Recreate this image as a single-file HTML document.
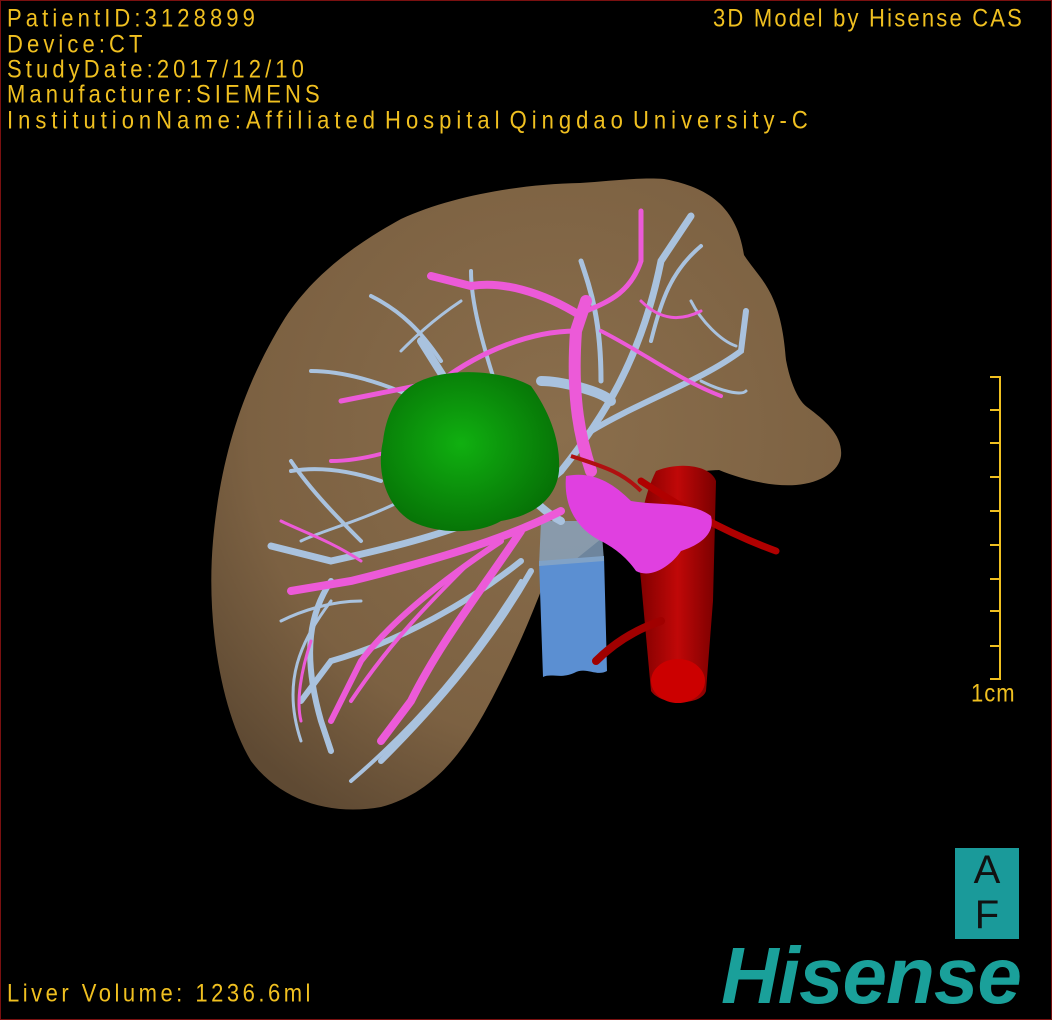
<!DOCTYPE html>
<html><head><meta charset="utf-8"><style>
html,body{margin:0;padding:0;background:#000;}
#w{position:relative;width:1052px;height:1020px;overflow:hidden;background:#000;box-sizing:border-box;border:1px solid #7a1010;}
.t{position:absolute;font-family:"Liberation Sans","Noto Sans CJK SC",sans-serif;color:#f0c020;font-size:22px;line-height:25px;white-space:nowrap;letter-spacing:4.1px;transform:scaleY(1.12);transform-origin:0 0;}
svg{position:absolute;left:0;top:0;}
</style></head><body><div id="w">
<svg width="1052" height="1020" viewBox="0 0 1052 1020">
<defs>
<radialGradient id="lv" cx="0.55" cy="0.4" r="0.7"><stop offset="0" stop-color="#8a6e4c"/><stop offset="0.7" stop-color="#7c6142"/><stop offset="1" stop-color="#5f4a33"/></radialGradient>
<radialGradient id="gr" cx="0.45" cy="0.45" r="0.6"><stop offset="0" stop-color="#10b010"/><stop offset="1" stop-color="#067006"/></radialGradient>
<linearGradient id="ao" x1="0" x2="1"><stop offset="0" stop-color="#800000"/><stop offset="0.5" stop-color="#c00808"/><stop offset="1" stop-color="#7a0000"/></linearGradient>
</defs>
<path d="M663,178 C700,185 735,200 743,254 C760,280 780,290 785,359 C790,385 798,400 806,406 C825,420 842,435 840,455 C838,470 820,482 795,484 C770,486 740,478 718,469 C700,470 680,470 650,500 C610,530 570,560 540,590 C528,620 520,640 500,680 C470,740 440,790 380,806 C330,815 280,800 250,760 C220,710 205,620 212,540 C220,450 245,380 284,317 C315,270 360,240 400,218 C450,195 520,183 579,182 C610,180 640,176 663,178 Z" fill="url(#lv)"/>
<path d="M538,560 L603,555 L606,670 C595,676 585,665 573,672 C560,678 550,672 542,676 Z" fill="#5b8fd2"/>
<path d="M540,520 L600,520 L603,560 L538,565 Z" fill="#8aa6c4" opacity="0.8"/>
<g stroke="#a9c2de" stroke-linecap="round" fill="none">
<path d="M560,520 C520,500 470,420 420,340" stroke-width="8"/>
<path d="M560,470 C600,420 640,360 660,260 L690,215" stroke-width="7"/>
<path d="M590,430 C640,400 700,380 740,350 L745,310" stroke-width="6"/>
<path d="M560,470 C500,520 420,540 330,560 L270,545" stroke-width="7"/>
<path d="M520,560 C470,600 400,640 330,660 L300,700" stroke-width="6"/>
<path d="M530,570 C490,640 440,700 380,760" stroke-width="6"/>
<path d="M520,580 C470,660 420,720 350,780" stroke-width="4"/>
<path d="M420,400 C380,380 340,370 310,370" stroke-width="4"/>
<path d="M440,360 C420,330 400,310 370,295" stroke-width="4"/>
<path d="M500,400 C480,340 470,300 470,270" stroke-width="4"/>
<path d="M600,380 C600,320 590,290 580,260" stroke-width="5"/>
<path d="M650,340 C660,300 670,270 700,245" stroke-width="4"/>
<path d="M330,580 C310,610 300,650 320,720 L330,750" stroke-width="6"/>
<path d="M360,540 C340,520 310,490 290,460" stroke-width="4"/>
<path d="M360,600 C330,600 300,610 280,620" stroke-width="3"/>
<path d="M700,380 C720,390 740,395 745,390" stroke-width="3"/>
<path d="M540,380 C560,380 600,390 610,400" stroke-width="10"/>
<path d="M380,480 C350,470 320,465 290,470" stroke-width="4"/>
<path d="M400,500 C360,520 320,530 300,540" stroke-width="3"/>
<path d="M330,600 C300,640 280,680 300,740" stroke-width="3"/>
<path d="M460,300 C430,320 410,340 400,350" stroke-width="3"/>
<path d="M690,300 C700,320 720,340 735,345" stroke-width="3"/>
</g>
<g stroke="#ec5ad8" stroke-linecap="round" fill="none">
<path d="M590,470 C580,440 570,400 575,330 L585,300" stroke-width="12"/>
<path d="M580,315 C540,290 500,280 470,285 L430,275" stroke-width="8"/>
<path d="M585,310 C610,300 630,290 640,260 L640,210" stroke-width="5"/>
<path d="M600,330 C640,350 680,380 720,395" stroke-width="4"/>
<path d="M575,330 C530,330 480,350 440,380 L340,400" stroke-width="5"/>
<path d="M560,510 C500,540 430,560 350,580 L290,590" stroke-width="8"/>
<path d="M520,530 C480,590 440,640 410,700 L380,740" stroke-width="8"/>
<path d="M500,540 C440,580 390,620 360,660 L330,720" stroke-width="6"/>
<path d="M470,560 C430,600 390,640 350,700" stroke-width="4"/>
<path d="M440,430 C400,450 360,460 330,460" stroke-width="4"/>
<path d="M640,300 C660,320 680,320 700,310" stroke-width="3"/>
<path d="M310,640 C300,670 295,700 300,720" stroke-width="3"/>
<path d="M360,560 C330,540 300,530 280,520" stroke-width="3"/>
</g>
<path d="M410,385 C440,365 500,368 530,385 C548,410 560,440 558,470 C555,500 530,515 500,520 C480,532 440,535 410,520 C385,505 375,470 382,440 C385,415 395,395 410,385 Z" fill="url(#gr)"/>
<path d="M655,470 C680,460 710,465 715,480 L712,600 L705,690 C700,705 660,705 650,690 L640,580 C635,540 640,500 655,470 Z" fill="url(#ao)"/>
<ellipse cx="677" cy="680" rx="27" ry="22" fill="#c00"/>
<path d="M640,480 C670,500 720,530 775,550" stroke="#b00000" stroke-width="7" fill="none" stroke-linecap="round"/>
<path d="M660,620 C630,630 610,645 595,660" stroke="#a00000" stroke-width="8" fill="none" stroke-linecap="round"/>
<path d="M570,455 C600,465 620,470 640,490" stroke="#b01010" stroke-width="4" fill="none"/>
<path d="M565,475 C590,470 610,480 630,500 C660,505 690,500 710,515 C715,535 695,545 680,550 C670,565 650,578 635,570 C625,555 610,545 600,540 C580,530 562,510 565,475 Z" fill="#e040e0"/>
<g stroke="#f0c020" stroke-width="2">
<line x1="999" y1="375" x2="999" y2="679"/>
<line x1="989" y1="376" x2="999" y2="376"/><line x1="989" y1="409" x2="999" y2="409"/><line x1="989" y1="442" x2="999" y2="442"/><line x1="989" y1="476" x2="999" y2="476"/><line x1="989" y1="510" x2="999" y2="510"/><line x1="989" y1="544" x2="999" y2="544"/><line x1="989" y1="578" x2="999" y2="578"/><line x1="989" y1="610" x2="999" y2="610"/><line x1="989" y1="645" x2="999" y2="645"/><line x1="989" y1="678" x2="999" y2="678"/>
</g>
<rect x="954" y="847" width="64" height="91" fill="#1a9a9a"/>
</svg>
<div class="t" style="left:6px;top:3px">PatientID:3128899</div>
<div class="t" style="left:6px;top:29px">Device:CT</div>
<div class="t" style="left:6px;top:54px">StudyDate:2017/12/10</div>
<div class="t" style="left:6px;top:79px">Manufacturer:SIEMENS</div>
<div class="t" style="left:6px;top:105px;letter-spacing:5px;word-spacing:-6px">InstitutionName:Affiliated Hospital Qingdao University-C</div>
<div class="t" style="left:712px;top:3px;letter-spacing:2.2px">3D Model by Hisense CAS</div>
<div class="t" style="left:970px;top:678px;letter-spacing:1px">1cm</div>
<div class="t" style="left:6px;top:978px;letter-spacing:3.5px">Liver Volume: 1236.6ml</div>
<div style="position:absolute;left:954px;top:847px;width:64px;text-align:center;font-family:'Liberation Sans',sans-serif;font-size:40px;line-height:45px;color:#111;">A<br>F</div>
<div style="position:absolute;left:720px;top:932px;font-family:'Liberation Sans',sans-serif;font-weight:bold;font-style:italic;font-size:80px;line-height:86px;color:#1aa09a;letter-spacing:-1px;">Hisense</div>
</div></body></html>
